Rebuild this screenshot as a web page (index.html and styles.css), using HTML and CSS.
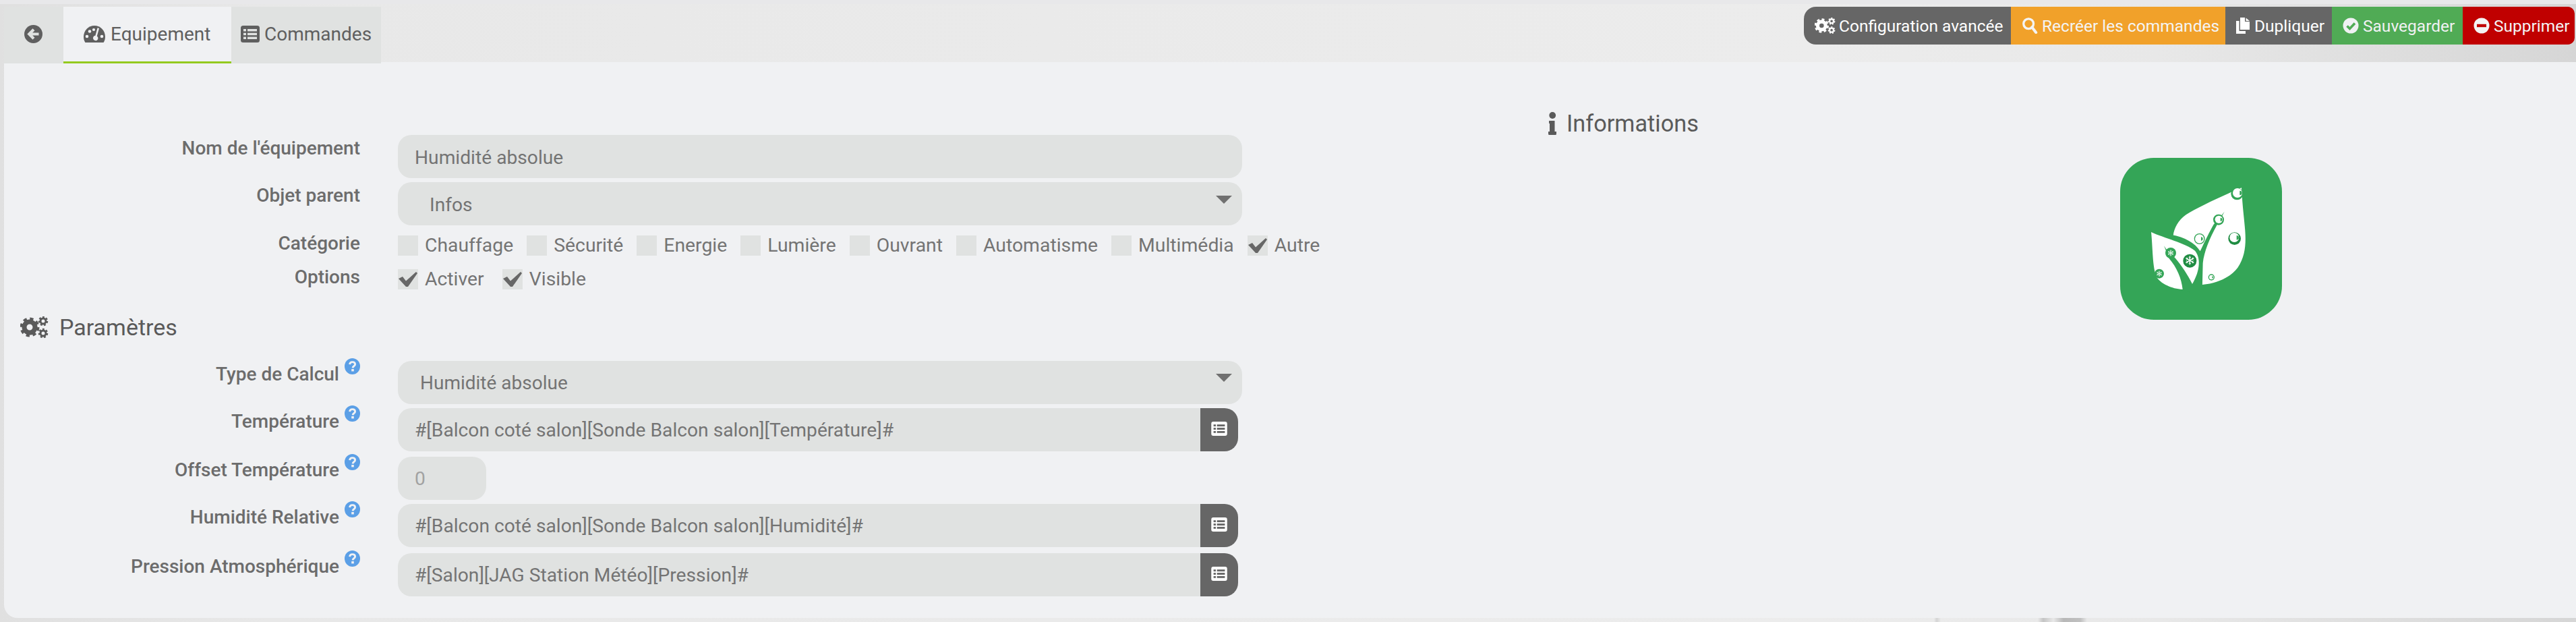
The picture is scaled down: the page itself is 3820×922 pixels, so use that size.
FILE: index.html
```html
<!DOCTYPE html>
<html lang="fr">
<head>
<meta charset="utf-8">
<title>Equipement</title>
<link rel="stylesheet" href="styles.css">
</head>
<body>
<svg class="defs" width="0" height="0" aria-hidden="true">
  <symbol id="cogs" viewBox="0 0 42 32">
    <g fill="none" stroke="currentColor">
      <circle cx="14" cy="16" r="8" stroke-width="7"/>
      <circle cx="14" cy="16" r="12.5" stroke-width="4" stroke-dasharray="5.2 4.6"/>
      <circle cx="34" cy="7" r="4" stroke-width="3"/>
      <circle cx="34" cy="7" r="6" stroke-width="2.5" stroke-dasharray="2.8 2.5"/>
      <circle cx="34" cy="25" r="4" stroke-width="3"/>
      <circle cx="34" cy="25" r="6" stroke-width="2.5" stroke-dasharray="2.8 2.5"/>
    </g>
  </symbol>
  <symbol id="listalt" viewBox="0 0 28 25">
    <rect width="28" height="25" rx="3.5" fill="currentColor"/>
    <g fill="var(--cut)">
      <rect x="4" y="5" width="4" height="3.4"/><rect x="10" y="5" width="14" height="3.4"/>
      <rect x="4" y="10.8" width="4" height="3.4"/><rect x="10" y="10.8" width="14" height="3.4"/>
      <rect x="4" y="16.6" width="4" height="3.4"/><rect x="10" y="16.6" width="14" height="3.4"/>
    </g>
  </symbol>
  <symbol id="help" viewBox="0 0 23 24">
    <ellipse cx="11.5" cy="12" rx="11.5" ry="12" fill="#5b9fe6"/>
    <path d="M7.6 9.2C7.8 6.8 9.4 5.6 11.6 5.6 14 5.6 15.6 7 15.6 9 15.6 11.6 12.2 11.8 12.1 14.4" fill="none" stroke="#f0f1f3" stroke-width="2.9"/>
    <rect x="10.2" y="16" width="3.6" height="3.4" fill="#f0f1f3"/>
  </symbol>
  <symbol id="check" viewBox="0 0 30 30">
    <path d="M1 14 7 11 12 17.5 27 4 29 6 15 26 12 26Z" fill="#676767"/>
  </symbol>
  <symbol id="flake" viewBox="-10 -10 20 20">
    <g stroke="#fff" stroke-width="2" fill="none">
      <path d="M0-9V9M-8-4.5 8 4.5M-8 4.5 8-4.5"/>
      <path d="M-2.5-7 0-4.5 2.5-7M-2.5 7 0 4.5 2.5 7M-7-1 -4-2.5-6-6M7-1 4-2.5 6-6M-7 1-4 2.5-6 6M7 1 4 2.5 6 6" stroke-width="1.2"/>
    </g>
  </symbol>
</svg>

<div class="page">
  <header class="topbar">
    <nav class="tabs">
      <a class="tab tab-back">
        <svg class="ic-back" viewBox="0 0 27 27"><circle cx="13.5" cy="13.5" r="13.5" fill="#5f5f5f"/><path d="M21.5 13.5H8M14 6.8 7.3 13.5 14 20.2" fill="none" stroke="#e0e2e1" stroke-width="4.2"/></svg>
      </a>
      <a class="tab tab-active">
        <svg class="ic-gauge" viewBox="0 0 32 25"><path d="M2.4 25C.8 22.4 0 19.6 0 16.5 0 7.4 7.2 0 16 0S32 7.4 32 16.5C32 19.6 31.2 22.4 29.6 25Z" fill="#5f5f5f"/><g fill="#f0f1f3"><circle cx="5" cy="16" r="2.3"/><circle cx="9" cy="8.5" r="2.3"/><circle cx="15" cy="6" r="2.1"/><circle cx="27" cy="16" r="2.3"/><path d="M20.6 3.2 23 4 19.8 15.5C21.2 16.6 21.6 18 21.3 19.4 20.8 21.5 18.8 22.6 16.8 22.1 14.8 21.6 13.6 19.6 14.1 17.6 14.5 16 15.9 14.9 17.4 14.8Z"/></g></svg>
        <span>Equipement</span>
      </a>
      <a class="tab tab-cmd">
        <svg class="ic-list"><use href="#listalt"/></svg>
        <span>Commandes</span>
      </a>
    </nav>
    <div class="actions">
      <a class="btn btn-grey btn-first">
        <svg class="ic-cogs"><use href="#cogs"/></svg>Configuration avancée
      </a>
      <a class="btn btn-orange">
        <svg class="ic-btn" viewBox="0 0 24 26"><circle cx="10" cy="10" r="8" fill="none" stroke="currentColor" stroke-width="3.6"/><path d="M15.5 15.5 22 24" stroke="currentColor" stroke-width="4.4" stroke-linecap="round"/></svg>Recréer les commandes
      </a>
      <a class="btn btn-grey btn-dup">
        <svg class="ic-dup" viewBox="0 0 21 24"><path d="M6 0H13V6H20V18H6Z" fill="currentColor"/><path d="M14.5.5 20 5H14.5Z" fill="currentColor"/><path d="M0 5H4.5V20H14V24H0Z" fill="currentColor"/></svg>Dupliquer
      </a>
      <a class="btn btn-green">
        <svg class="ic-btn" viewBox="0 0 24 24"><circle cx="12" cy="12" r="11.5" fill="currentColor"/><path d="M6.5 12.5 10.5 16.5 18 8.5" fill="none" stroke="#50ab55" stroke-width="3.6"/></svg>Sauvegarder
      </a>
      <a class="btn btn-red">
        <svg class="ic-btn" viewBox="0 0 24 24"><circle cx="12" cy="12" r="11.5" fill="currentColor"/><rect x="5" y="9.8" width="14" height="4.4" fill="#c00000"/></svg>Supprimer
      </a>
    </div>
  </header>

  <main class="panel">
    <section class="form">
      <div class="row row-top">
        <div class="label">Nom de l'équipement</div>
        <div class="field field-wide">Humidité absolue</div>
      </div>
      <div class="row row-top">
        <div class="label">Objet parent</div>
        <div class="field field-wide field-select field-infos">Infos<i class="caret"></i></div>
      </div>
      <div class="row row-checks row-cat">
        <div class="label">Catégorie</div>
        <div class="checks">
          <span class="box"></span><span class="check-text">Chauffage</span>
          <span class="box"></span><span class="check-text">Sécurité</span>
          <span class="box"></span><span class="check-text">Energie</span>
          <span class="box"></span><span class="check-text">Lumière</span>
          <span class="box"></span><span class="check-text">Ouvrant</span>
          <span class="box"></span><span class="check-text">Automatisme</span>
          <span class="box"></span><span class="check-text">Multimédia</span>
          <span class="box"><svg class="ic-check"><use href="#check"/></svg></span><span class="check-text">Autre</span>
        </div>
      </div>
      <div class="row row-checks row-opt">
        <div class="label">Options</div>
        <div class="checks">
          <span class="box"><svg class="ic-check"><use href="#check"/></svg></span><span class="check-text">Activer</span>
          <span class="box"><svg class="ic-check"><use href="#check"/></svg></span><span class="check-text">Visible</span>
        </div>
      </div>

      <h3 class="heading heading-params"><svg class="ic-cogs-lg"><use href="#cogs"/></svg>Paramètres</h3>

      <div class="row row-help row-type">
        <div class="label">Type de Calcul<svg class="ic-help"><use href="#help"/></svg></div>
        <div class="field field-wide field-select field-type">Humidité absolue<i class="caret caret-high"></i></div>
      </div>
      <div class="row row-help">
        <div class="label">Température<svg class="ic-help"><use href="#help"/></svg></div>
        <div class="group">
          <div class="field field-cmd">#[Balcon coté salon][Sonde Balcon salon][Température]#</div>
          <a class="addon"><svg class="ic-addon"><use href="#listalt"/></svg></a>
        </div>
      </div>
      <div class="row row-help row-offset">
        <div class="label">Offset Température<svg class="ic-help"><use href="#help"/></svg></div>
        <div class="field field-num">0</div>
      </div>
      <div class="row row-help">
        <div class="label">Humidité Relative<svg class="ic-help"><use href="#help"/></svg></div>
        <div class="group">
          <div class="field field-cmd">#[Balcon coté salon][Sonde Balcon salon][Humidité]#</div>
          <a class="addon"><svg class="ic-addon"><use href="#listalt"/></svg></a>
        </div>
      </div>
      <div class="row row-help row-press">
        <div class="label">Pression Atmosphérique<svg class="ic-help"><use href="#help"/></svg></div>
        <div class="group">
          <div class="field field-cmd">#[Salon][JAG Station Météo][Pression]#</div>
          <a class="addon"><svg class="ic-addon"><use href="#listalt"/></svg></a>
        </div>
      </div>
    </section>

    <aside class="info">
      <h3 class="heading heading-info">
        <svg class="ic-info" viewBox="0 0 12 34"><circle cx="6.2" cy="5" r="4.9" fill="#5a5a5a"/><path d="M1 13H9.5V29H12V32.5Q12 34 10.5 34H1.5Q0 34 0 32.5V29H2V17H1Z" fill="#5a5a5a"/></svg>Informations
      </h3>
      <svg class="logo" viewBox="132 72 720 720">
        <rect x="132" y="72" width="720" height="720" rx="150" fill="#34a557"/>
        <path d="M672 205C590 240 480 290 425 325 390 350 372 385 368 418L490 640 498 636C570 630 625 600 655 560 690 510 692 450 688 395 684 340 676 290 672 205Z" fill="#fff"/>
        <path d="M360 414C420 425 465 450 488 487 510 440 530 400 548 368L596 312 562 372C530 430 505 490 500 540L497 665H360Z" fill="#34a557"/>
        <path d="M270 402C330 430 420 450 465 485 490 515 490 570 453 633L410 657C360 655 315 630 300 610 275 580 278 480 270 402Z" fill="#fff"/>
        <path d="M327 463 345 490 375 515C405 550 435 595 453 633L440 670 410 657C405 610 385 560 350 520Z" fill="#34a557"/>
        <circle cx="652" cy="232" r="27" fill="#34a557"/><circle cx="654" cy="228" r="21" fill="#fff"/><path d="M664 218a10 10 0 0 1 0 20z" fill="#34a557"/>
        <circle cx="570" cy="347" r="24" fill="#34a557"/><circle cx="571" cy="346" r="17" fill="#fff"/><path d="M578 338a8 8 0 0 1 0 16z" fill="#34a557"/>
        <circle cx="485" cy="432" r="24" fill="#34a557"/><circle cx="485" cy="432" r="20" fill="#fff"/><path d="M492 424a8 8 0 0 1 0 16z" fill="#34a557"/>
        <circle cx="641" cy="431" r="28" fill="#1f8c42"/><circle cx="640" cy="426" r="21" fill="#fff"/><path d="M650 417a10 10 0 0 1 0 20z" fill="#34a557"/>
        <circle cx="538" cy="603" r="14" fill="#34a557"/><circle cx="538" cy="603" r="10" fill="#fff"/><path d="M541 598a5 5 0 0 1 0 10z" fill="#34a557"/>
        <circle cx="357" cy="495" r="24" fill="#34a557"/><use href="#flake" x="342" y="480" width="30" height="30"/>
        <circle cx="442" cy="530" r="30" fill="#1f8c42"/><use href="#flake" x="420" y="506" width="44" height="44"/>
        <circle cx="306" cy="587" r="21" fill="#34a557"/><use href="#flake" x="292" y="573" width="28" height="28"/>
      </svg>
    </aside>
  </main>
</div>
</body>
</html>
```

FILE: styles.css
```css
* { box-sizing: border-box; }
html, body { margin: 0; padding: 0; }
body {
  font-family: Roboto, "Liberation Sans", sans-serif;
  font-size: 28px;
  color: #747474;
  overflow: hidden;
}
.defs { position: absolute; }
h3 { margin: 0; font-weight: 400; }

.page {
  width: 3820px;
  height: 922px;
  border-top: 6px solid #e8e8ea;
  padding: 0 0 6px 6px;
  display: flex;
  flex-direction: column;
  background:
    linear-gradient(90deg, transparent 2868px, #d4d4d4 2872px, transparent 2878px, transparent 3022px, #c4c4c4 3030px, #e8e8e8 3045px, #b8b8b8 3060px, #c0c0c0 3085px, transparent 3095px) left bottom / 100% 6px no-repeat,
    linear-gradient(90deg, #e0e0e0 0, #e8e8e8 400px, #ececec 2700px, #e8e8e8 3200px, #d6d6d6 3820px);
}

/* top bar */
.topbar {
  height: 86px;
  padding-top: 4px;
  display: flex;
  justify-content: space-between;
  align-items: flex-start;
}
.tabs {
  display: flex;
  height: 84px;
  position: relative;
  z-index: 1;
  color: #5f5f5f;
}
.tab {
  display: flex;
  align-items: center;
  height: 84px;
  background: #e0e2e1;
  --cut: #e0e2e1;
  padding-bottom: 3px;
}
.tab-back { width: 88px; padding-left: 30px; }
.tab-active {
  width: 249px;
  padding-left: 30px;
  background: #f0f1f3;
  border-bottom: 3px solid #94ca1e;
  padding-bottom: 0;
}
.tab-cmd { width: 222px; padding-left: 14px; }
.ic-back { width: 27px; height: 27px; }
.ic-gauge { width: 32px; height: 25px; margin-right: 8px; }
.ic-list { width: 28px; height: 25px; margin-right: 7px; }

.actions {
  display: flex;
  height: 56px;
  margin-right: 2px;
}
.btn {
  display: flex;
  align-items: center;
  height: 56px;
  padding: 0 0 0 16px;
  font-size: 24.5px;
  color: #fff;
  white-space: nowrap;
}
.btn-first { width: 307px; border-radius: 18px 0 0 18px; padding-left: 16px; }
.btn-grey { background: #666; }
.btn-orange { width: 318px; background: #f1a12a; color: #f4f4f4; }
.btn-dup { width: 158px; }
.btn-green { width: 194px; background: #50ab55; color: #f0f1f3; }
.btn-red { width: 166px; background: #c00000; color: #f4f4f4; border-radius: 0 10px 10px 0; }
.ic-cogs { width: 31px; height: 24px; margin-right: 5px; color: #fff; }
.ic-btn { width: 24px; height: 24px; margin-right: 6px; }
.ic-dup { width: 21px; height: 24px; margin-right: 6px; }

/* panel */
.panel {
  flex: 1;
  background: #f0f1f3;
  border-radius: 0 0 0 20px;
  display: flex;
}
.form {
  width: 1840px;
  padding-top: 108px;
  display: flex;
  flex-direction: column;
  gap: 6px;
}
.row {
  display: flex;
  align-items: flex-start;
  gap: 56px;
}
.label {
  width: 528px;
  flex: none;
  display: flex;
  justify-content: flex-end;
  font-weight: 500;
  line-height: 36px;
  color: #6c6c6c;
}
.row-top .label { padding-top: 2px; }
.row-help .label { padding-top: 2px; }
.ic-help { width: 23px; height: 24px; margin: -6px 0 0 8px; flex: none; }

.field {
  height: 64px;
  line-height: 66px;
  font-size: 28.2px;
  background: #e0e2e1;
  border-radius: 20px;
  padding-left: 25px;
  color: #747474;
}
.row-top .field { line-height: 68px; }
.field-wide { width: 1252px; }
.field-select {
  display: flex;
  justify-content: space-between;
  padding-right: 15px;
}
.field-infos { padding-left: 47px; }
.field-type { padding-left: 33px; font-size: 28px; }
.field-num { width: 131px; color: #a2a2a2; }
.caret {
  width: 0;
  height: 0;
  margin-top: 20px;
  border-left: 12px solid transparent;
  border-right: 12px solid transparent;
  border-top: 12px solid #707070;
}
.caret-high { margin-top: 19px; }

.group { display: flex; width: 1246px; }
.field-cmd { flex: 1; border-radius: 20px 0 0 20px; }
.addon {
  width: 56px;
  height: 64px;
  background: #666;
  border-radius: 0 20px 20px 0;
  display: flex;
  align-items: center;
  justify-content: center;
  color: #fff;
  --cut: #666;
}
.ic-addon { width: 24px; height: 21px; margin-bottom: 4px; }

/* checks */
.row-checks .label { margin-top: -6px; }
.row-cat { margin-top: 9px; }
.row-opt { margin-top: 14px; }
.checks { display: flex; align-items: center; height: 30px; }
.box {
  width: 30px;
  height: 30px;
  background: #e0e2e1;
  flex: none;
}
.ic-check { display: block; width: 30px; height: 30px; }
.check-text {
  font-size: 28.35px;
  line-height: 32px;
  margin: 0 20px 0 10px;
  color: #747474;
}
.row-opt .check-text { margin-right: 27px; }

/* headings */
.heading {
  display: flex;
  align-items: center;
  font-size: 34px;
  color: #5a5a5a;
}
.heading-params {
  height: 40px;
  margin: 30px 0 24px 24px;
}
.ic-cogs-lg { width: 42px; height: 32px; margin-right: 16px; }
.row-offset { margin-top: 2px; }
.row-press { margin-top: 3px; }

/* right column */
.info {
  margin-left: 450px;
  padding-top: 74px;
}
.heading-info { height: 34px; font-size: 34.3px; }
.ic-info { width: 12px; height: 34px; margin-right: 15px; }
.logo {
  display: block;
  width: 240px;
  height: 240px;
  margin: 34px 0 0 848px;
}
```
